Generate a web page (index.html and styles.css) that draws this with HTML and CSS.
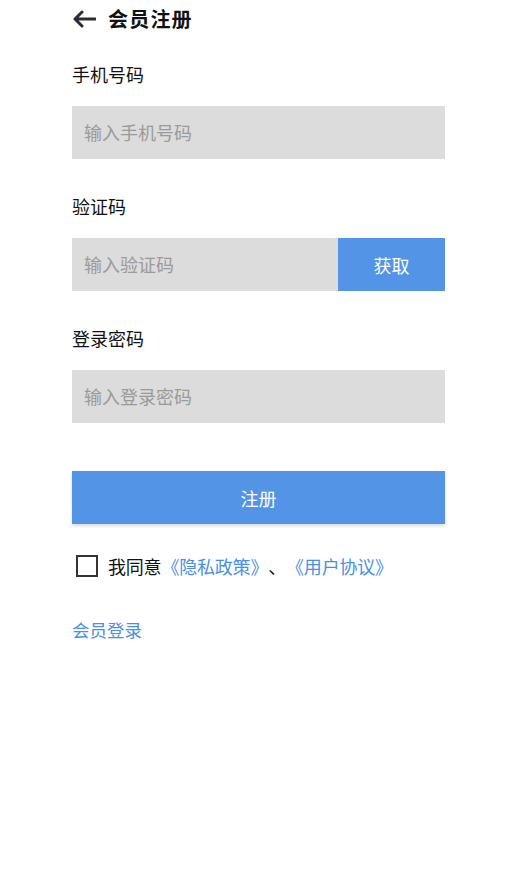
FILE: index.html
```html
<!DOCTYPE html>
<html lang="zh-CN">
<head>
<meta charset="utf-8">
<link rel="stylesheet" href="styles.css">
</head>
<body>
<div class="page">
  <header class="header">
    <svg class="back" width="24" height="18" viewBox="0 0 24 18"><path d="M23 9H3M10 2L3 9l7 7" fill="none" stroke="#2a2a38" stroke-width="3" stroke-linecap="round" stroke-linejoin="round"/></svg>
    <h1 class="title">会员注册</h1>
  </header>
  <div class="field">
    <div class="label">手机号码</div>
    <div class="input"><span class="ph">输入手机号码</span></div>
  </div>
  <div class="field">
    <div class="label">验证码</div>
    <div class="row">
      <div class="input grow"><span class="ph">输入验证码</span></div>
      <div class="get">获取</div>
    </div>
  </div>
  <div class="field">
    <div class="label">登录密码</div>
    <div class="input"><span class="ph">输入登录密码</span></div>
  </div>
  <div class="submit">注册</div>
  <div class="agree">
    <span class="box"></span>
    <span class="txt">我同意<a class="link">《隐私政策》</a>、<a class="link">《用户协议》</a></span>
  </div>
  <div class="login"><a class="link">会员登录</a></div>
</div>
</body>
</html>
```
FILE: styles.css
```css
* { box-sizing: border-box; }
html, body { margin: 0; padding: 0; background: #fff; }
body {
  font-family: "Noto Sans CJK SC", "Noto Sans", sans-serif;
  color: #111;
  width: 514px;
  text-spacing-trim: space-all;
}
.page { width: 373px; margin-left: 72px; }
.header { display: flex; align-items: center; height: 38px; }
.back { display: block; margin-right: 12px; }
.title { margin: 0; font-size: 20px; font-weight: 700; line-height: 38px; color: #111; letter-spacing: 1.2px; }
.field { margin-top: 22px; }
.field + .field { margin-top: 33px; }
.label { font-size: 18px; line-height: 28px; height: 28px; }
.input {
  margin-top: 18px;
  height: 53px;
  background: #dcdcdc;
  display: flex;
  align-items: center;
  padding-left: 12px;
}
.ph { font-size: 18px; color: #9a9a9a; margin-top: -1px; }
.row { display: flex; margin-top: 18px; }
.row .input { margin-top: 0; }
.grow { flex: 1; }
.get {
  width: 107px;
  height: 53px;
  background: #5394e6;
  color: #fff;
  font-size: 18px;
  display: flex;
  align-items: center;
  justify-content: center;
}
.submit {
  margin-top: 48px;
  height: 53px;
  background: #5394e6;
  color: #fff;
  font-size: 18px;
  display: flex;
  align-items: center;
  justify-content: center;
  box-shadow: 0 2px 3px rgba(0,0,0,0.15);
}
.agree { display: flex; align-items: center; margin-top: 30px; height: 24px; }
.box { width: 22px; height: 22px; border: 2px solid #333; margin-left: 4px; margin-right: 10px; }
.txt { font-size: 18px; line-height: 24px; color: #111; letter-spacing: -0.2px; }
.link { color: #4a8fe2; text-decoration: none; }
.login { margin-top: 40px; font-size: 17.5px; line-height: 24px; }
```
